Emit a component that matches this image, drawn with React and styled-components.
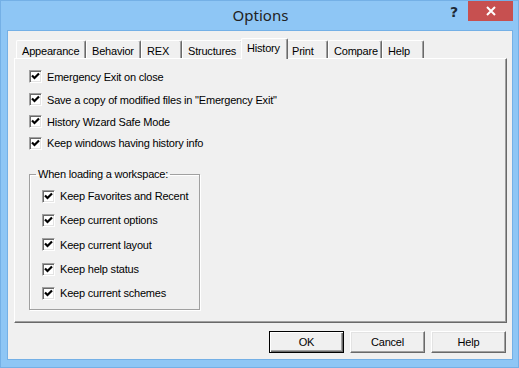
import React from 'react'
import styled, { createGlobalStyle } from 'styled-components'

const Global = createGlobalStyle`
html, body {
  margin: 0;
  padding: 0;
  background: #8ec6f5;
}
* {
  box-sizing: border-box;
}
`

const Window = styled.div`
width: 519px;
height: 368px;
display: flex;
flex-direction: column;
background: #8ec6f5;
border: 1px solid #74b0e6;
font-family: "Liberation Sans", Arial, sans-serif;
font-size: 11px;
letter-spacing: -0.2px;
color: #000;
`

const TitleBar = styled.div`
height: 29px;
display: grid;
grid-template-columns: 1fr auto 1fr;
align-items: start;
`

const Title = styled.div`
grid-column: 2;
font-family: "Noto Sans", "Open Sans", sans-serif;
font-size: 15px;
letter-spacing: 0;
color: #222;
line-height: 29px;
padding-left: 2px;
`

const Controls = styled.div`
grid-column: 3;
display: flex;
justify-content: flex-end;
align-items: flex-start;
padding-right: 5px;
gap: 10px;
`

const HelpMark = styled.span`
font-family: "DejaVu Sans", sans-serif;
font-weight: bold;
font-size: 14px;
letter-spacing: 0;
color: #1e2a35;
line-height: 22px;
`

const CloseBtn = styled.div`
width: 45px;
height: 20px;
background: #c75050;
display: flex;
align-items: center;
justify-content: center;
`

const Client = styled.div`
flex: 1;
margin: 0 5px 7px 6px;
border: 1px solid #74b0e6;
background: #f0f0f0;
display: flex;
flex-direction: column;
padding: 7px 5px 6px 6px;
`

const TabRow = styled.div`
display: flex;
align-items: flex-end;
height: 20px;
padding-left: 2px;
`

const Tab = styled.div`
position: relative;
width: ${p => p.$w}px;
height: ${p => (p.$active ? 21 : 18)}px;
margin: ${p => (p.$active ? '0 -2px -1px -2px' : '0')};
padding: ${p => (p.$active ? '3px 0 0 5px' : '4px 0 0 5px')};
background: #f0f0f0;
border-top: 1px solid #fff;
border-left: 1px solid #fff;
border-right: 1px solid #696969;
border-top-left-radius: 2px;
border-top-right-radius: 2px;
box-shadow: inset -1px 0 0 #a0a0a0;
z-index: ${p => (p.$active ? 2 : 0)};
white-space: nowrap;
`

const Panel = styled.div`
flex: 1;
display: flex;
flex-direction: column;
align-items: flex-start;
padding: 6px 14px 0 14px;
border: 1px solid;
border-color: #fff #696969 #696969 #fff;
box-shadow: inset -1px -1px 0 #a0a0a0;
`

const Row = styled.label`
display: flex;
align-items: center;
gap: 5px;
height: ${p => p.$h || 22}px;
white-space: nowrap;
`

const Box = styled.span`
width: 13px;
height: 13px;
background: #fff;
border: 1px solid;
border-color: #a0a0a0 #fff #fff #a0a0a0;
box-shadow: inset 1px 1px 0 #696969, inset -1px -1px 0 #e3e3e3;
display: flex;
align-items: center;
justify-content: center;
flex-shrink: 0;
`

const Group = styled.fieldset`
margin: 14px 0 0 0;
width: 171px;
padding: 4px 0 4px 12px;
border: 1px solid #a0a0a0;
box-shadow: 1px 1px 0 #fff, inset 1px 1px 0 #fff;
min-inline-size: 0;
`

const Legend = styled.legend`
margin-left: -6px;
padding: 0 2px;
`

const ButtonRow = styled.div`
display: flex;
justify-content: flex-end;
gap: 6px;
margin-top: 8px;
padding-right: 1px;
`

const Button = styled.button`
width: 75px;
height: 22px;
font-family: inherit;
font-size: 11px;
letter-spacing: -0.2px;
color: #000;
background: #f0f0f0;
border: 1px solid;
border-color: ${p => (p.$default ? '#000' : '#fff #696969 #696969 #fff')};
box-shadow: ${p => (p.$default
    ? 'inset 1px 1px 0 #fff, inset -1px -1px 0 #696969, inset -2px -2px 0 #a0a0a0'
    : 'inset -1px -1px 0 #a0a0a0, inset 1px 1px 0 #e3e3e3')};
padding: 0;
`

const Check = () => (
  <Box>
    <svg width="9" height="9" viewBox="0 0 9 9">
      <path d="M1 3.5 L3.5 6 L8 1.5" fill="none" stroke="#000" strokeWidth="2.2" />
    </svg>
  </Box>
)

const CheckRow = ({ children, h }) => (
  <Row $h={h}>
    <Check />
    <span>{children}</span>
  </Row>
)

const tabs = [
  { label: 'Appearance', w: 70 },
  { label: 'Behavior', w: 55 },
  { label: 'REX', w: 41 },
  { label: 'Structures', w: 61 },
  { label: 'History', w: 47, active: true },
  { label: 'Print', w: 42 },
  { label: 'Compare', w: 54 },
  { label: 'Help', w: 42 },
]

const main = [
  { text: 'Emergency Exit on close', h: 23 },
  { text: 'Save a copy of modified files in "Emergency Exit"', h: 23 },
  { text: 'History Wizard Safe Mode', h: 21 },
  { text: 'Keep windows having history info', h: 22 },
]

const workspace = [
  'Keep Favorites and Recent',
  'Keep current options',
  'Keep current layout',
  'Keep help status',
  'Keep current schemes',
]

const App = () => {
  return (
    <>
      <Global />
      <Window>
        <TitleBar>
          <Title>Options</Title>
          <Controls>
            <HelpMark>?</HelpMark>
            <CloseBtn>
              <svg width="10" height="10" viewBox="0 0 10 10">
                <path d="M1 1 L9 9 M9 1 L1 9" stroke="#fff" strokeWidth="2" />
              </svg>
            </CloseBtn>
          </Controls>
        </TitleBar>
        <Client>
          <TabRow>
            {tabs.map(t => (
              <Tab key={t.label} $w={t.w} $active={t.active}>{t.label}</Tab>
            ))}
          </TabRow>
          <Panel>
            {main.map(m => (
              <CheckRow key={m.text} h={m.h}>{m.text}</CheckRow>
            ))}
            <Group>
              <Legend>When loading a workspace:</Legend>
              {workspace.map(w => (
                <CheckRow key={w} h={24.3}>{w}</CheckRow>
              ))}
            </Group>
          </Panel>
          <ButtonRow>
            <Button $default>OK</Button>
            <Button>Cancel</Button>
            <Button>Help</Button>
          </ButtonRow>
        </Client>
      </Window>
    </>
  )
}

export default App
